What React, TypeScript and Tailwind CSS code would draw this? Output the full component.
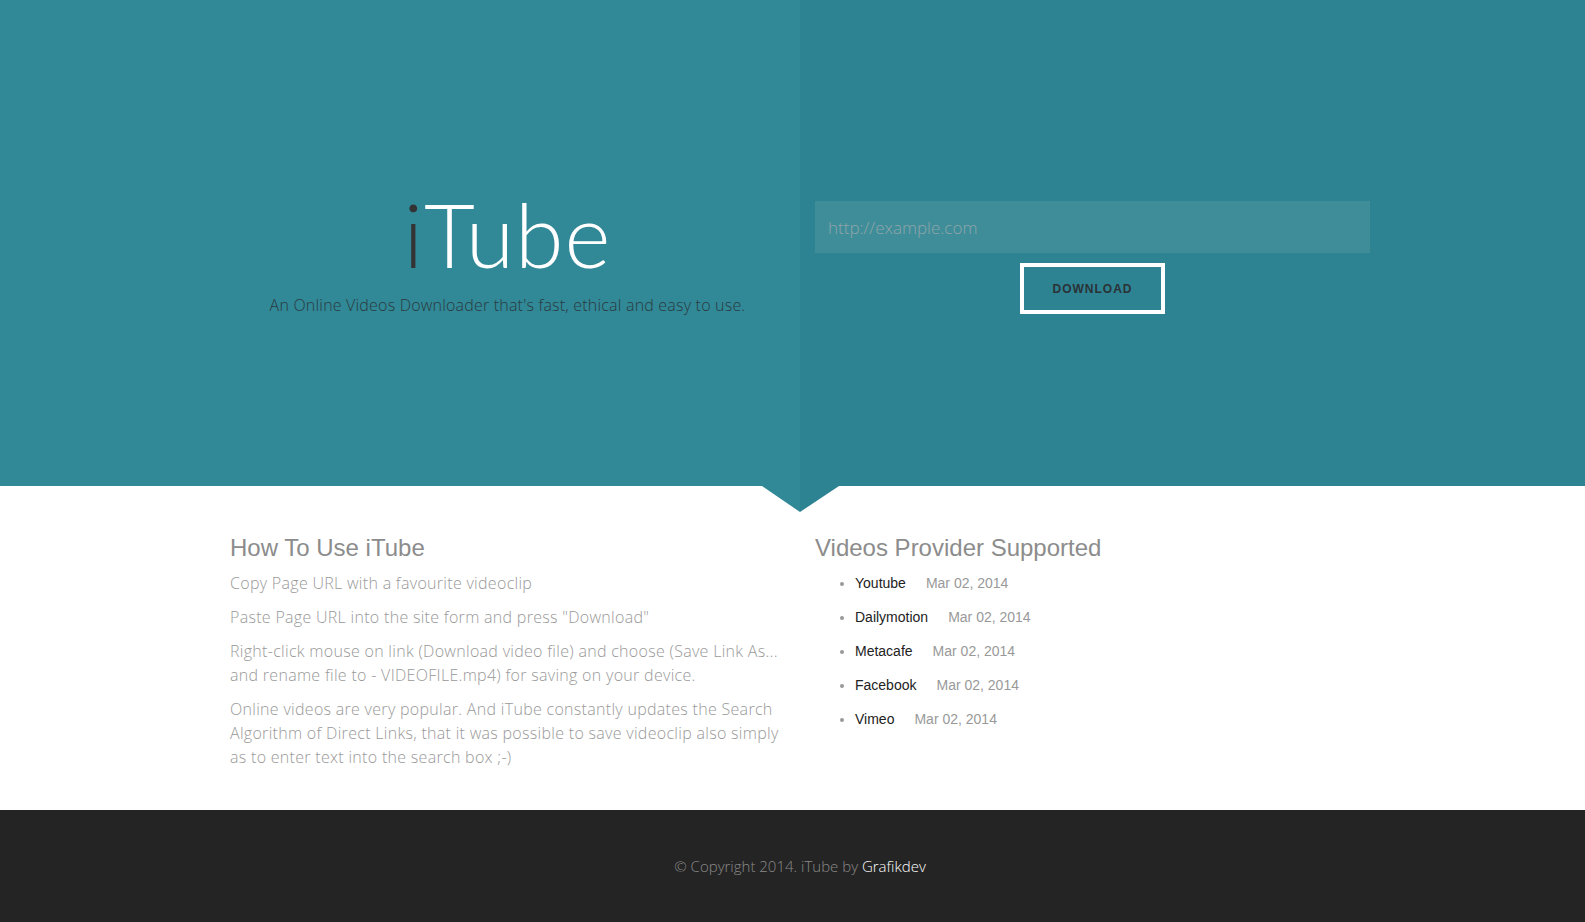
import React from "react";

const raleway = "font-['Open_Sans','Lato',sans-serif]";
const arial = "font-['Liberation_Sans',Arial,sans-serif]";

const providers = ["Youtube", "Dailymotion", "Metacafe", "Facebook", "Vimeo"];

export default function App() {
  return (
    <div className={`min-h-[922px] w-full bg-white ${raleway}`}>
      {/* hero */}
      <header className="relative flex h-[486px]">
        <div className="w-[800px] bg-[#318896] pl-[230px] pr-[15px]">
          <div className="flex flex-col items-center pt-[186px]">
            <h1 className="font-['Lato',sans-serif] text-[88px] font-light leading-[1.1] tracking-[1px] text-white">
              <span className="text-[#333]">i</span>Tube
            </h1>
            <p className="mt-[10px] text-[16px] font-light tracking-[0.2px] text-[#2a3a3f]">
              An Online Videos Downloader that's fast, ethical and easy to use.
            </p>
          </div>
        </div>
        <div className="flex-1 bg-[#2e8393] pl-[15px]">
          <form
            className="flex w-[555px] flex-col items-center pt-[201px]"
            onSubmit={(e) => e.preventDefault()}
          >
            <input
              type="text"
              placeholder="http://example.com"
              className="h-[52px] w-full bg-[#3f8d99] px-[13px] text-[17px] font-light text-white outline-none placeholder:text-[#8fa5a9]"
            />
            <button
              type="submit"
              className={`mt-[10px] h-[51px] w-[145px] border-4 border-white text-[12px] font-bold tracking-[1px] text-[#2a3236] ${arial}`}
            >
              DOWNLOAD
            </button>
          </form>
        </div>
        <svg
          className="absolute left-[762px] top-[486px]"
          width="77"
          height="26"
          viewBox="0 0 77 26"
        >
          <polygon points="0,0 38,0 38,26" fill="#318896" />
          <polygon points="38,0 77,0 38,26" fill="#2e8393" />
        </svg>
      </header>

      {/* info */}
      <section className="grid grid-cols-[555px_555px] gap-x-[30px] pb-[31px] pl-[230px] pt-[49px]">
        <div>
          <h2 className={`mb-[10px] text-[24px] leading-[1.1] text-[#8c8c8c] ${arial}`}>
            How To Use iTube
          </h2>
          <div className="text-[16px] font-light leading-[24px] tracking-[0.3px] text-[#999]">
            <p className="mb-[10px]">Copy Page URL with a favourite videoclip</p>
            <p className="mb-[10px]">Paste Page URL into the site form and press "Download"</p>
            <p className="mb-[10px] whitespace-nowrap">
              Right-click mouse on link (Download video file) and choose (Save Link As...
              <br />
              and rename file to - VIDEOFILE.mp4) for saving on your device.
            </p>
            <p className="mb-[10px] whitespace-nowrap">
              Online videos are very popular. And iTube constantly updates the Search
              <br />
              Algorithm of Direct Links, that it was possible to save videoclip also simply
              <br />
              as to enter text into the search box ;-)
            </p>
          </div>
        </div>
        <div>
          <h2 className={`mb-[10px] text-[24px] leading-[1.1] text-[#8c8c8c] ${arial}`}>
            Videos Provider Supported
          </h2>
          <ul className={`list-disc pl-[40px] text-[14px] leading-[24px] marker:text-[#999] ${arial}`}>
            {providers.map((p) => (
              <li key={p} className="mb-[10px]">
                <span className="text-[#222]">{p}</span>
                <span className="ml-[20px] text-[#999]">Mar 02, 2014</span>
              </li>
            ))}
          </ul>
        </div>
      </section>

      {/* footer */}
      <footer className="flex h-[112px] items-center bg-[#242424]">
        <p className="w-[1600px] shrink-0 text-center text-[15px] font-light text-[#8a8a8a]">
          © Copyright 2014. iTube by <a className="text-white">Grafikdev</a>
        </p>
      </footer>
    </div>
  );
}
